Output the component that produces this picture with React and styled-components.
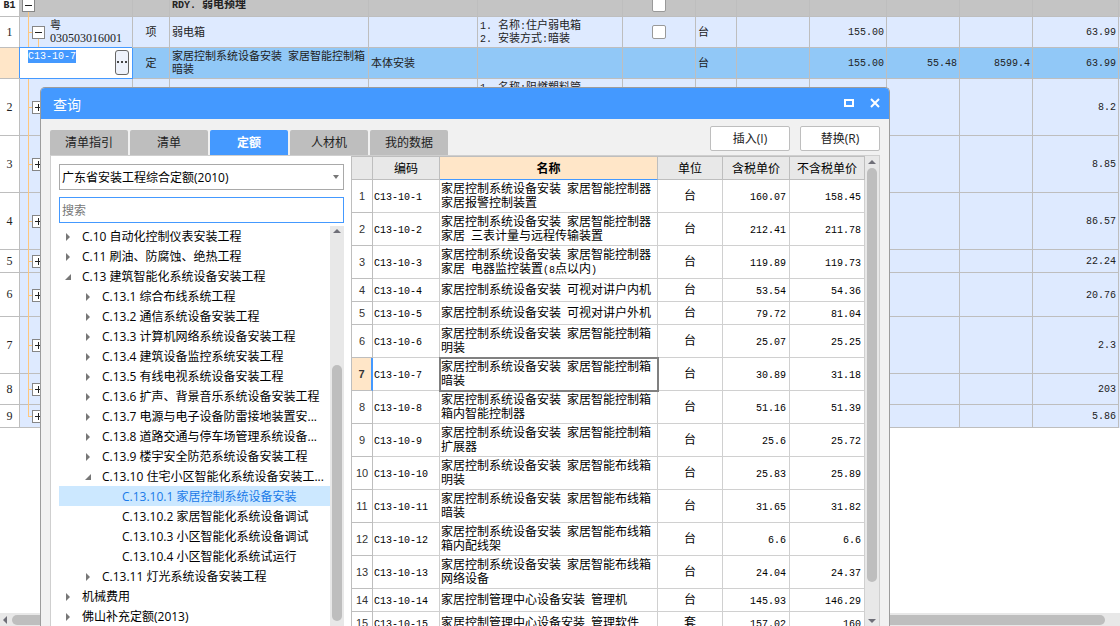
import React from "react";
import styled, { createGlobalStyle, css } from "styled-components";

const mono = `"Liberation Mono", "Noto Sans CJK SC", monospace`;
const sans = `"Open Sans", "Noto Sans CJK SC", sans-serif`;

const GlobalStyle = createGlobalStyle`
  * { box-sizing: border-box; }
  body { margin: 0; background: #fff; font-family: ${sans}; font-size: 12px; color: #222; }
  button, input, select { font: inherit; color: inherit; margin: 0; }
`;

const Page = styled.main`
  position: relative;
  display: flex;
  flex-direction: column;
  height: 100vh;
  overflow: hidden;
`;

const SheetView = styled.div`
  flex: 1;
  min-height: 0;
  overflow: hidden;
`;

/* Latin runs use a fixed half-width face, Chinese runs a full-width one */
const Latin = styled.span`
  font-family: ${mono};
  font-size: 10px;
  line-height: 1;
  white-space: pre-wrap;
`;

/* Codes and row numbers made of digits alone */
const Digits = styled.span`
  font-family: "Liberation Serif", serif;
  font-size: 12px;
  line-height: 1;
`;

const Line = styled.span`
  display: block;
  height: 1lh;
`;

function Run({ text }) {
  if (/^\d+$/.test(text)) return <Digits>{text}</Digits>;
  if (/^[ -~]+$/.test(text)) return <Latin>{text}</Latin>;
  return text;
}

function Mixed({ text }) {
  return text.split("\n").map((line) => (
    <Line key={line}>
      {line.split(/([ -~]+)/).map((part, i) => (
        <Run key={i} text={part} />
      ))}
    </Line>
  ));
}

/* ---------- main sheet ---------- */

const Sheet = styled.table`
  width: 100%;
  margin-top: -7px;
  table-layout: fixed;
  border-collapse: separate;
  border-spacing: 0;
  font-size: 11px;
  line-height: 13px;
`;

const rowTone = {
  group: "#c4c4c4",
  item: "#deeaff",
  active: "#91c8f7",
};

const SheetRow = styled.tr`
  height: ${(p) => p.$height}px;
  background: ${(p) => rowTone[p.$tone]};
  font-weight: ${(p) => (p.$tone === "group" ? "bold" : "normal")};
`;

const cellBorder = css`
  border-right: 1px solid #bebebe;
  border-bottom: 1px solid #bebebe;
`;

const RowHead = styled.th`
  ${cellBorder}
  padding: 0 0 2px;
  background: ${(p) => (p.$active ? "#ffe6c8" : "#fff")};
  font-weight: inherit;
  text-align: center;
`;

const SheetCell = styled.td`
  ${cellBorder}
  padding: 0 2px 2px;
  overflow: hidden;
  text-align: ${(p) => p.$align || "left"};
`;

const CodeCell = styled.td`
  ${cellBorder}
  position: relative;
  padding: 0 0 2px 30px;

  &::before {
    content: "";
    position: absolute;
    left: 8px;
    top: ${(p) => (p.$first ? "50%" : "0")};
    bottom: ${(p) => (p.$last ? "50%" : "-1px")};
    border-left: 1px solid #ffc77d;
  }
  &::after {
    content: "";
    display: ${(p) => (p.$first ? "none" : "block")};
    position: absolute;
    left: 8px;
    top: 50%;
    width: 4px;
    border-top: 1px solid #ffc77d;
  }
`;

const Branch = styled.span`
  position: absolute;
  left: 18px;
  top: 50%;
  bottom: -1px;
  border-left: 1px solid #ffc77d;
`;

const Expander = styled.button`
  position: absolute;
  z-index: 1;
  left: ${(p) => (p.$root ? 2 : 12)}px;
  top: calc(50% - 6px);
  display: flex;
  width: 13px;
  height: 13px;
  padding: 0;
  border: 1px solid #868686;
  background: #fff;
`;

function Toggle({ open, root }) {
  return (
    <Expander type="button" $root={root} aria-label={open ? "折叠" : "展开"}>
      <svg width="11" height="11" viewBox="0 0 11 11" stroke="#222">
        <path d={open ? "M2 5.5H9" : "M2 5.5H9M5.5 2V9"} />
      </svg>
    </Expander>
  );
}

const Tick = styled.input.attrs({ type: "checkbox" })`
  appearance: none;
  display: block;
  width: 14px;
  height: 14px;
  margin: 2px auto 0;
  border: 1px solid #999;
  border-radius: 2px;
  background: #fff;
`;

const EditCell = styled.td`
  position: relative;
  padding: 0;
  background: #fff;
  border-right: 1px solid #4499ff;
  border-bottom: 1px solid #4499ff;
  box-shadow: -1px -1px 0 #4499ff;
  vertical-align: top;
`;

const Editor = styled.div`
  display: flex;
  justify-content: space-between;
  padding: 2px 3px 0 8px;
`;

const CodeInput = styled.input`
  width: 48px;
  height: 13px;
  padding: 0;
  border: 0;
  background: #4499ff;
  color: #fff;
  font-family: ${mono};
  font-size: 10px;
`;

const MoreButton = styled.button`
  display: flex;
  align-items: center;
  justify-content: center;
  width: 14px;
  height: 25px;
  padding: 0;
  border: 1px solid #666;
  border-radius: 3px;
  background: #eef2fb;
`;

const sheetCols = [20, 113, 37, 199, 109, 145, 73, 41, 73, 77, 73, 73];

const sheetRows = [
  { no: "B1", h: 24, tone: "group", open: true, root: true, name: "RDY. 弱电预埋", tick: true },
  { no: "1", h: 31, tone: "item", open: true, code: "粤\n030503016001", kind: "项", name: "弱电箱", feature: "1. 名称:住户弱电箱\n2. 安装方式:暗装", tick: true, unit: "台", qty: "155.00", total: "63.99" },
  { no: "", h: 31, tone: "active", edit: true, kind: "定", name: "家居控制系统设备安装 家居智能控制箱\n暗装", spec: "本体安装", unit: "台", qty: "155.00", price: "55.48", sum: "8599.4", total: "63.99" },
  { no: "2", h: 57, tone: "item", feature: "1. 名称:阻燃塑料管\n2. 材质:PVC\n3. 规格:DN20\n4. 暗敷", total: "8.2" },
  { no: "3", h: 57, tone: "item", total: "8.85" },
  { no: "4", h: 57, tone: "item", total: "86.57" },
  { no: "5", h: 23, tone: "item", total: "22.24" },
  { no: "6", h: 44, tone: "item", total: "20.76" },
  { no: "7", h: 57, tone: "item", total: "2.3" },
  { no: "8", h: 31, tone: "item", total: "203" },
  { no: "9", h: 23, tone: "item", total: "5.86", last: true },
];

function MainSheet() {
  return (
    <Sheet>
      <colgroup>
        {sheetCols.map((w, i) => (
          <col key={i} style={{ width: w }} />
        ))}
        <col />
        <col style={{ width: 1 }} />
      </colgroup>
      <tbody>
        {sheetRows.map((r, i) => (
          <SheetRow key={i} $height={r.h} $tone={r.tone}>
            <RowHead scope="row" $active={r.edit}><Run text={r.no} /></RowHead>
            {r.edit ? (
              <EditCell>
                <Editor>
                  <CodeInput aria-label="编码" defaultValue="C13-10-7" />
                  <MoreButton type="button" aria-label="更多">
                    <svg width="12" height="3" viewBox="0 0 12 3" fill="#444">
                      <path d="M1 0h2v2H1zM5 0h2v2H5zM9 0h2v2H9z" />
                    </svg>
                  </MoreButton>
                </Editor>
              </EditCell>
            ) : (
              <CodeCell $first={r.root} $last={r.last}>
                {r.code && <Branch />}
                <Toggle open={r.open} root={r.root} />
                {r.code && <Mixed text={r.code} />}
              </CodeCell>
            )}
            <SheetCell $align="center">{r.kind}</SheetCell>
            <SheetCell>{r.name && <Mixed text={r.name} />}</SheetCell>
            <SheetCell>{r.spec}</SheetCell>
            <SheetCell>{r.feature && <Mixed text={r.feature} />}</SheetCell>
            <SheetCell>{r.tick && <Tick aria-label="选择" />}</SheetCell>
            <SheetCell>{r.unit}</SheetCell>
            <SheetCell />
            <SheetCell $align="right">{r.qty && <Latin>{r.qty}</Latin>}</SheetCell>
            <SheetCell $align="right">{r.price && <Latin>{r.price}</Latin>}</SheetCell>
            <SheetCell $align="right">{r.sum && <Latin>{r.sum}</Latin>}</SheetCell>
            <SheetCell $align="right">{r.total && <Latin>{r.total}</Latin>}</SheetCell>
            <td />
          </SheetRow>
        ))}
      </tbody>
    </Sheet>
  );
}

/* ---------- scroll bars ---------- */

const HBar = styled.div`
  display: flex;
  align-items: center;
  height: 13px;
  padding: 2px 15px 1px 0;
  background: #e8e8e8;
`;

const HThumb = styled.div`
  flex: 1;
  height: 10px;
  border-radius: 5px;
  background: #bebebe;
`;

const HArrow = styled.svg`
  flex: none;
  width: 12px;
  height: 10px;
`;

const VBar = styled.div`
  display: flex;
  flex: none;
  flex-direction: column;
  align-items: center;
  width: 14px;
  background: #e8e8e8;
`;

const VThumb = styled.div`
  width: 10px;
  flex: ${(p) => p.$grow} 0 0;
  border-radius: 5px;
  background: #bebebe;
`;

const Track = styled.div`
  flex: ${(p) => p.$grow} 0 0;
`;

const VArrow = styled.svg`
  flex: none;
  width: 10px;
  height: 12px;
  fill: #6f6f78;
`;

/* ---------- query window ---------- */

const Dialog = styled.section`
  position: absolute;
  z-index: 2;
  left: 40px;
  top: 87px;
  bottom: 0;
  width: calc(100% - 270px);
  display: flex;
  flex-direction: column;
  overflow: hidden;
  border: 1px solid #9c9c9c;
  border-bottom: 0;
  border-radius: 5px 5px 0 0;
  background: #f1f1f1;
`;

const TitleBar = styled.header`
  display: flex;
  flex: none;
  align-items: center;
  gap: 10px;
  height: 31px;
  padding: 0 6px 0 12px;
  background: #4499ff;
  color: #fff;
`;

const Title = styled.h1`
  flex: 1;
  margin: 0;
  font-size: 14px;
  font-weight: normal;
`;

const WindowButton = styled.button`
  display: flex;
  width: 16px;
  height: 16px;
  padding: 0;
  border: 0;
  background: none;
`;

const Toolbar = styled.div`
  display: flex;
  flex: none;
  align-items: flex-end;
  justify-content: space-between;
  height: 36px;
  padding: 0 9px;
`;

const Tabs = styled.div`
  display: flex;
  gap: 2px;
`;

const Tab = styled.button`
  width: 78px;
  height: 25px;
  padding: 0 0 2px;
  border: 0;
  border-radius: 2px 2px 0 0;
  background: ${(p) => (p.$active ? "#4499ff" : "#bebebe")};
  color: ${(p) => (p.$active ? "#fff" : "#222")};
  font-weight: ${(p) => (p.$active ? "bold" : "normal")};
`;

const Actions = styled.div`
  display: flex;
  gap: 10px;
  padding-bottom: 4px;
`;

const ActionButton = styled.button`
  width: 80px;
  height: 25px;
  padding: 0 0 2px;
  border: 1px solid #bebebe;
  border-radius: 2px;
  background: #fff;
`;

const Panel = styled.div`
  display: flex;
  flex: 1;
  min-height: 0;
  margin: 0 9px;
  border: 1px solid #cfcfcf;
  border-bottom: 0;
  background: #fff;
`;

const SidePane = styled.aside`
  display: flex;
  flex: none;
  flex-direction: column;
  width: 300px;
  padding: 8px 7px 0 8px;
  color: #000;
`;

const SelectWrap = styled.div`
  position: relative;
  flex: none;
  height: 26px;
  margin-bottom: 7px;
`;

const BookSelect = styled.select`
  appearance: none;
  width: 100%;
  height: 26px;
  padding: 0 2px;
  border: 1px solid #a9a9a9;
  border-radius: 0;
  background: #fff;
`;

const SelectArrow = styled.svg`
  position: absolute;
  right: 5px;
  top: 11px;
  pointer-events: none;
`;

const SearchInput = styled.input`
  flex: none;
  width: 100%;
  height: 26px;
  margin-bottom: 3px;
  padding: 0 2px;
  border: 1px solid #4499ff;
  &::placeholder { color: #777; opacity: 1; }
`;

const TreeArea = styled.div`
  display: flex;
  flex: 1;
  min-height: 0;
`;

const Tree = styled.ul`
  flex: 1;
  min-width: 0;
  margin: 0;
  padding: 0;
  overflow: hidden;
  list-style: none;
`;

const TreeItem = styled.li`
  display: flex;
  align-items: center;
  gap: 11px;
  height: 20px;
  padding-top: 2px;
  padding-left: ${(p) => 5 + p.$level * 20}px;
  background: ${(p) => (p.$active ? "#cce8ff" : "transparent")};
  color: ${(p) => (p.$active ? "#1a7ae8" : "#000")};
  line-height: 18px;
  white-space: nowrap;
`;

const TreeMark = styled.svg`
  flex: none;
  width: 7px;
  height: 8px;
  fill: #777;
`;

const markPath = { closed: "M2 0L6 4L2 8Z", open: "M7 1V7H1Z" };

const treeItems = [
  [0, "closed", "C.10 自动化控制仪表安装工程"],
  [0, "closed", "C.11 刷油、防腐蚀、绝热工程"],
  [0, "open", "C.13 建筑智能化系统设备安装工程"],
  [1, "closed", "C.13.1 综合布线系统工程"],
  [1, "closed", "C.13.2 通信系统设备安装工程"],
  [1, "closed", "C.13.3 计算机网络系统设备安装工程"],
  [1, "closed", "C.13.4 建筑设备监控系统安装工程"],
  [1, "closed", "C.13.5 有线电视系统设备安装工程"],
  [1, "closed", "C.13.6 扩声、背景音乐系统设备安装工程"],
  [1, "closed", "C.13.7 电源与电子设备防雷接地装置安..."],
  [1, "closed", "C.13.8 道路交通与停车场管理系统设备..."],
  [1, "closed", "C.13.9 楼宇安全防范系统设备安装工程"],
  [1, "open", "C.13.10 住宅小区智能化系统设备安装工..."],
  [2, "", "C.13.10.1 家居控制系统设备安装"],
  [2, "", "C.13.10.2 家居智能化系统设备调试"],
  [2, "", "C.13.10.3 小区智能化系统设备调试"],
  [2, "", "C.13.10.4 小区智能化系统试运行"],
  [1, "closed", "C.13.11 灯光系统设备安装工程"],
  [0, "closed", "机械费用"],
  [0, "closed", "佛山补充定额(2013)"],
];

const ListPane = styled.div`
  display: flex;
  flex: 1;
  min-width: 0;
  border-left: 1px solid #bebebe;
`;

const ListView = styled.div`
  flex: 1;
  min-width: 0;
  overflow: hidden;
`;

const List = styled.table`
  width: 100%;
  table-layout: fixed;
  border-collapse: separate;
  border-spacing: 0;
  border-top: 1px solid #bebebe;
  color: #000;
  font-size: 12px;
  line-height: 14px;
`;

const ListHead = styled.th`
  height: 23px;
  padding: 1px 0 0;
  border-right: 1px solid #bebebe;
  border-bottom: 1px solid ${(p) => (p.$active ? "#4499ff" : "#bebebe")};
  background: ${(p) => (p.$active ? "#ffe6c8" : "#e8e8e8")};
  font-weight: ${(p) => (p.$active ? "bold" : "normal")};
  white-space: nowrap;
`;

const ListRow = styled.tr`
  height: ${(p) => (p.$tall ? 33 : 23)}px;
`;

const ListCell = styled.td`
  padding: 0 ${(p) => (p.$align === "center" ? 1 : 3)}px 0 1px;
  overflow: hidden;
  border-right: 1px solid #d0d0d0;
  border-bottom: 1px solid #d0d0d0;
  text-align: ${(p) => p.$align || "left"};
  ${(p) => p.$active && css`
    outline: 2px solid #808080;
    outline-offset: -1px;
  `}
`;

const ListNo = styled.th`
  padding: 0;
  border-right: 1px solid #bebebe;
  border-bottom: 1px solid #bebebe;
  color: #333;
  font-family: "Liberation Sans", sans-serif;
  font-size: 11px;
  font-weight: normal;
  ${(p) => p.$active && css`
    border-right: 2px solid #4499ff;
    background: #ffe6c8;
    font-weight: bold;
  `}
`;

const A = "家居控制系统设备安装 家居智能控制器\n";
const B = "家居控制系统设备安装 家居智能控制箱\n";
const C = "家居控制系统设备安装 家居智能布线箱\n";

const listRows = [
  [A + "家居报警控制装置", "台", "160.07", "158.45"],
  [A + "家居 三表计量与远程传输装置", "台", "212.41", "211.78"],
  [A + "家居 电器监控装置(8点以内)", "台", "119.89", "119.73"],
  ["家居控制系统设备安装 可视对讲户内机", "台", "53.54", "54.36"],
  ["家居控制系统设备安装 可视对讲户外机", "台", "79.72", "81.04"],
  [B + "明装", "台", "25.07", "25.25"],
  [B + "暗装", "台", "30.89", "31.18"],
  [B + "箱内智能控制器", "台", "51.16", "51.39"],
  [B + "扩展器", "台", "25.6", "25.72"],
  [C + "明装", "台", "25.83", "25.89"],
  [C + "暗装", "台", "31.65", "31.82"],
  [C + "箱内配线架", "台", "6.6", "6.6"],
  [C + "网络设备", "台", "24.04", "24.37"],
  ["家居控制管理中心设备安装 管理机", "台", "145.93", "146.29"],
  ["家居控制管理中心设备安装 管理软件", "套", "157.02", "160"],
];

function QueryDialog() {
  return (
    <Dialog role="dialog" aria-labelledby="query-title">
      <TitleBar>
        <Title id="query-title">查询</Title>
        <WindowButton type="button" aria-label="最大化">
          <svg width="16" height="16" viewBox="0 0 16 16" fill="none" stroke="#fff" strokeWidth="2">
            <path d="M4 4H12V10H4Z" />
          </svg>
        </WindowButton>
        <WindowButton type="button" aria-label="关闭">
          <svg width="16" height="16" viewBox="0 0 16 16" fill="none" stroke="#fff" strokeWidth="2">
            <path d="M4 3L12 11M12 3L4 11" />
          </svg>
        </WindowButton>
      </TitleBar>
      <Toolbar>
        <Tabs role="tablist">
          {["清单指引", "清单", "定额", "人材机", "我的数据"].map((t) => (
            <Tab key={t} type="button" role="tab" aria-selected={t === "定额"} $active={t === "定额"}>{t}</Tab>
          ))}
        </Tabs>
        <Actions>
          <ActionButton type="button">插入(I)</ActionButton>
          <ActionButton type="button">替换(R)</ActionButton>
        </Actions>
      </Toolbar>
      <Panel>
        <SidePane>
          <SelectWrap>
            <BookSelect aria-label="定额库">
              <option>广东省安装工程综合定额(2010)</option>
            </BookSelect>
            <SelectArrow width="6" height="4" viewBox="0 0 6 4" fill="#777">
              <path d="M0 0H6L3 4Z" />
            </SelectArrow>
          </SelectWrap>
          <SearchInput type="text" aria-label="搜索" placeholder="搜索" />
          <TreeArea>
            <Tree>
              {treeItems.map(([level, state, label]) => (
                <TreeItem key={label} $level={level} $active={label.startsWith("C.13.10.1 ")}>
                  <TreeMark viewBox="0 0 7 8">{state && <path d={markPath[state]} />}</TreeMark>
                  {label}
                </TreeItem>
              ))}
            </Tree>
            <VBar>
              <VArrow viewBox="0 0 10 12"><path d="M1 7L5 3L9 7Z" /></VArrow>
              <Track $grow={127} />
              <VThumb $grow={256} />
              <Track $grow={5} />
            </VBar>
          </TreeArea>
        </SidePane>
        <ListPane>
          <ListView>
            <List>
              <colgroup>
                <col style={{ width: 21 }} />
                <col style={{ width: 67 }} />
                <col />
                <col style={{ width: 65 }} />
                <col style={{ width: 67 }} />
                <col style={{ width: 75 }} />
              </colgroup>
              <thead>
                <tr>
                  <ListHead />
                  <ListHead scope="col">编码</ListHead>
                  <ListHead scope="col" $active>名称</ListHead>
                  <ListHead scope="col">单位</ListHead>
                  <ListHead scope="col">含税单价</ListHead>
                  <ListHead scope="col">不含税单价</ListHead>
                </tr>
              </thead>
              <tbody>
                {listRows.map(([name, unit, taxed, untaxed], i) => (
                  <ListRow key={i} $tall={name.includes("\n")}>
                    <ListNo scope="row" $active={i === 6}>{i + 1}</ListNo>
                    <ListCell><Latin>{`C13-10-${i + 1}`}</Latin></ListCell>
                    <ListCell $active={i === 6}><Mixed text={name} /></ListCell>
                    <ListCell $align="center">{unit}</ListCell>
                    <ListCell $align="right"><Latin>{taxed}</Latin></ListCell>
                    <ListCell $align="right"><Latin>{untaxed}</Latin></ListCell>
                  </ListRow>
                ))}
              </tbody>
            </List>
          </ListView>
          <VBar>
            <VArrow viewBox="0 0 10 12"><path d="M1 8L5 4L9 8Z" /></VArrow>
            <VThumb $grow={413} />
            <Track $grow={32} />
            <VArrow viewBox="0 0 10 12"><path d="M1 5L5 9L9 5Z" /></VArrow>
          </VBar>
        </ListPane>
      </Panel>
    </Dialog>
  );
}

export default function App() {
  return (
    <Page>
      <GlobalStyle />
      <SheetView>
        <MainSheet />
      </SheetView>
      <HBar>
        <HArrow viewBox="0 0 12 10" fill="#6f6f78"><path d="M7 1V9L3 5Z" /></HArrow>
        <HThumb />
      </HBar>
      <QueryDialog />
    </Page>
  );
}
